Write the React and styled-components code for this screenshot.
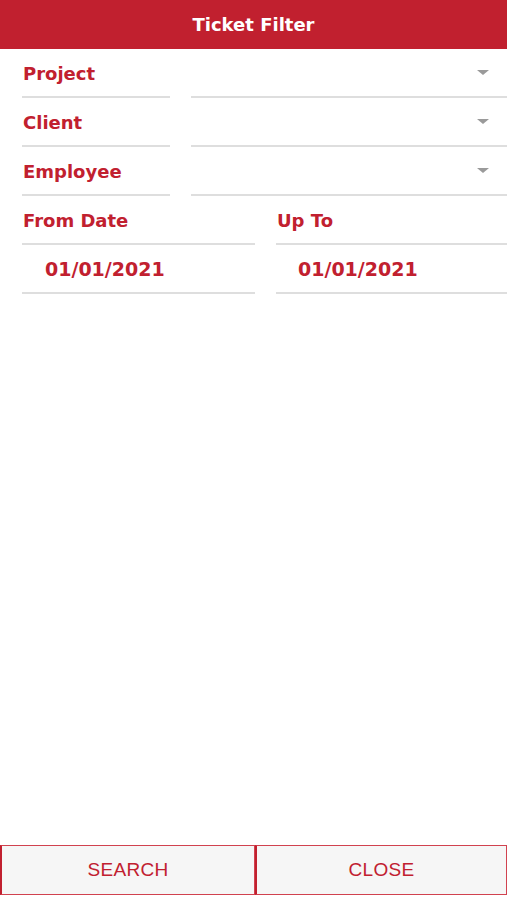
import React from "react";
import styled, { createGlobalStyle } from "styled-components";

const Global = createGlobalStyle`
  html, body { margin: 0; padding: 0; background: #fff; }
  body { font-family: "DejaVu Sans", Roboto, sans-serif; }
`;

const RED = "#c1202f";

const Page = styled.div`
  width: 507px;
  height: 900px;
  display: flex;
  flex-direction: column;
  background: #fff;
`;

const Header = styled.header`
  height: 49px;
  background: ${RED};
  color: #fff;
  display: flex;
  align-items: center;
  justify-content: center;
  font-family: "DejaVu Sans", sans-serif;
  font-weight: 700;
  font-size: 18px;
  flex-shrink: 0;
`;

const Form = styled.div`
  display: flex;
  flex-direction: column;
  padding-left: 22px;
  flex: 1;
`;

const Row = styled.div`
  display: grid;
  grid-template-columns: ${(p) => p.$cols};
  column-gap: 21px;
  height: 49px;
`;

const Cell = styled.div`
  display: flex;
  align-items: center;
  justify-content: space-between;
  border-bottom: 2px solid #dedede;
  padding-left: ${(p) => p.$indent || 1}px;
  padding-right: 18px;
  padding-top: ${(p) => (p.$indent ? 0 : 2)}px;
  box-sizing: border-box;
  color: ${RED};
  font-family: "DejaVu Sans", sans-serif;
  font-weight: 700;
  font-size: ${(p) => p.$size || 18}px;
`;

const Arrow = styled.span`
  width: 0;
  height: 0;
  border-left: 6px solid transparent;
  border-right: 6px solid transparent;
  border-top: 5px solid #9a9a9a;
  margin-top: -2px;
`;

const Footer = styled.div`
  display: grid;
  grid-template-columns: 255px 252px;
  height: 50px;
  margin-bottom: 5px;
`;

const Button = styled.button`
  background: #f6f6f6;
  border: 1.5px solid #d1424f;
  border-left: 2px solid #c1202f;
  color: ${RED};
  font-family: "Liberation Sans", Arial, sans-serif;
  font-size: 19px;
  letter-spacing: 0.3px;
  padding: 0;
  margin: 0;
  display: flex;
  align-items: center;
  justify-content: center;
`;

const selects = ["Project", "Client", "Employee"];

export default function App() {
  return (
    <>
      <Global />
      <Page>
        <Header>Ticket Filter</Header>
        <Form>
          {selects.map((s) => (
            <Row key={s} $cols="148px 316px">
              <Cell>{s}</Cell>
              <Cell>
                <span />
                <Arrow />
              </Cell>
            </Row>
          ))}
          <Row $cols="233px 231px">
            <Cell>From Date</Cell>
            <Cell>Up To</Cell>
          </Row>
          <Row $cols="233px 231px">
            <Cell $indent={23} $size={19}>01/01/2021</Cell>
            <Cell $indent={22} $size={19}>01/01/2021</Cell>
          </Row>
        </Form>
        <Footer>
          <Button>SEARCH</Button>
          <Button>CLOSE</Button>
        </Footer>
      </Page>
    </>
  );
}
